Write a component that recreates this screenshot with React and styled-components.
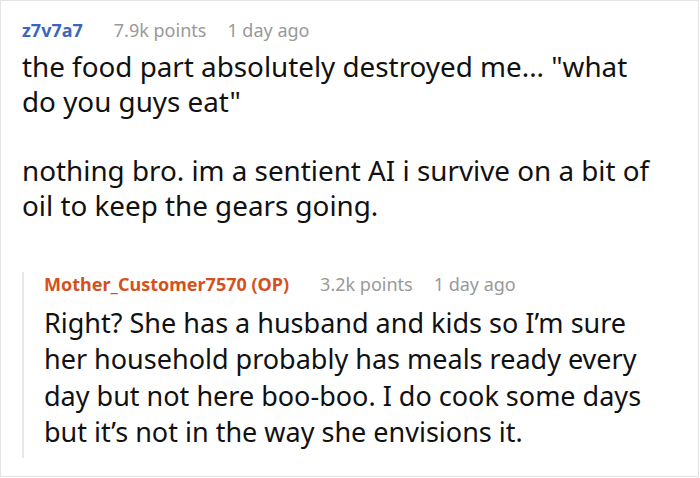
import React from "react";
import styled, { createGlobalStyle } from "styled-components";

const Global = createGlobalStyle`
  html, body { margin: 0; padding: 0; background: #fff; }
  body { font-family: "Noto Sans", "Open Sans", sans-serif; color: #111; }
`;

const Card = styled.div`
  box-sizing: border-box;
  width: 699px;
  height: 477px;
  border: 1px solid #e3e3e3;
  padding: 17px 28px 0 21px;
  overflow: hidden;
`;

const Header = styled.div`
  display: flex;
  align-items: baseline;
  font-size: 18px;
  line-height: 24px;
`;

const User = styled.span`
  font-weight: 700;
  margin-right: 31px;
  color: ${(p) => (p.$op ? "#d4511d" : "#3a67bd")};
`;

const Meta = styled.span`
  color: #999;
  margin-right: 21px;
`;

const Body = styled.div`
  font-size: ${(p) => p.$size || 27}px;
  line-height: ${(p) => p.$lh || 35}px;
  margin-top: ${(p) => p.$gap || 8}px;
  padding-right: ${(p) => p.$inset || 0}px;
  p { margin: 0 0 34px; }
  p:last-child { margin-bottom: 0; }
`;

const Reply = styled.div`
  margin-top: 49px;
  border-left: 2px solid #e8e8e8;
  padding: 0 0 8px 20px;
`;

const Comment = ({ user, op, points, time, children, size, lh, gap, inset }) => (
  <>
    <Header>
      <User $op={op}>{user}</User>
      <Meta>{points} points</Meta>
      <Meta>{time}</Meta>
    </Header>
    <Body $size={size} $lh={lh} $gap={gap} $inset={inset}>{children}</Body>
  </>
);

export default function App() {
  return (
    <>
      <Global />
      <Card>
        <Comment user="z7v7a7" points="7.9k" time="1 day ago" size={27.8} gap={7} inset={12}>
          <p>the food part absolutely destroyed me... "what do you guys eat"</p>
          <p>nothing bro. im a sentient AI i survive on a bit of oil to keep the gears going.</p>
        </Comment>
        <Reply>
          <Comment user="Mother_Customer7570 (OP)" op points="3.2k" time="1 day ago" size={27} lh={36.3} gap={9}>
            <p>Right? She has a husband and kids so I’m sure her household probably has meals ready every day but not here boo-boo. I do cook some days but it’s not in the way she envisions it.</p>
          </Comment>
        </Reply>
      </Card>
    </>
  );
}
